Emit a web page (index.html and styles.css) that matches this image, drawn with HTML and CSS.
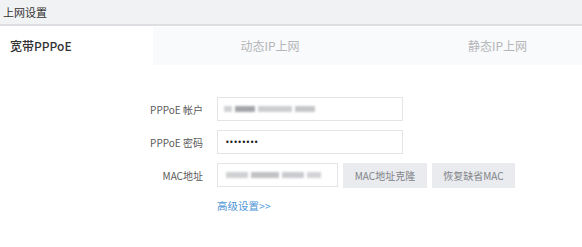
FILE: index.html
```html
<!DOCTYPE html>
<html lang="zh">
<head>
<meta charset="utf-8">
<title>上网设置</title>
<link rel="stylesheet" href="styles.css">
</head>
<body>
<div class="page">
  <div class="header">上网设置</div>
  <div class="tabs">
    <div class="tab tab-active">宽带PPPoE</div>
    <div class="tab tab-dyn">动态IP上网</div>
    <div class="tab tab-static">静态IP上网</div>
  </div>
  <div class="form">
    <div class="row">
      <label class="label">PPPoE 帐户</label>
      <div class="input input-wide">
        <span class="blur b1"></span><span class="blur b2"></span><span class="blur b3"></span><span class="blur b4"></span>
      </div>
    </div>
    <div class="row">
      <label class="label">PPPoE 密码</label>
      <div class="input input-wide"><span class="dots">••••••••</span></div>
    </div>
    <div class="row">
      <label class="label">MAC地址</label>
      <div class="input input-short">
        <span class="blur m1"></span><span class="blur m2"></span><span class="blur m3"></span><span class="blur m4"></span>
      </div>
      <button class="btn btn-clone">MAC地址克隆</button>
      <button class="btn btn-reset">恢复缺省MAC</button>
    </div>
    <div class="link-row"><a class="link">高级设置&gt;&gt;</a></div>
  </div>
</div>
</body>
</html>
```

FILE: styles.css
```css
* { box-sizing: border-box; }
html, body { margin: 0; padding: 0; background: #ffffff; }
body {
  font-family: "Noto Sans CJK SC", "Noto Sans", sans-serif;
  color: #333;
  width: 582px;
  height: 247px;
  overflow: hidden;
}
.header {
  height: 26px;
  background: #f1f2f4;
  border-bottom: 2px solid #dcdee1;
  font-size: 11px;
  line-height: 24px;
  padding-left: 3px;
  color: #333;
}
.tabs {
  display: flex;
  height: 38px;
  margin-top: 1px;
}
.tab {
  font-size: 12px;
  line-height: 38px;
  color: #b4b6b9;
  background: #f9fafb;
}
.tab-active {
  width: 153px;
  background: #ffffff;
  color: #333;
  font-weight: 500;
  padding-left: 10px;
  font-size: 12px;
}
.tab-dyn {
  width: 234px;
  text-align: center;
}
.tab-static {
  flex: 1;
  text-align: center;
  padding-left: 26px;
}
.form {
  padding-top: 32px;
  display: flex;
  flex-direction: column;
  gap: 9px;
}
.row {
  display: flex;
  align-items: center;
  height: 24px;
}
.label {
  width: 203px;
  text-align: right;
  font-size: 10px;
  color: #5a5a5a;
  margin-right: 14px;
}
.input {
  height: 24px;
  border: 1px solid #e2e4e7;
  background: #fff;
  display: flex;
  align-items: center;
  padding-left: 6px;
  gap: 3px;
}
.input-wide { width: 186px; }
.input-short { width: 121px; }
.blur {
  display: inline-block;
  height: 6px;
  background: #a9abae;
  filter: blur(1.2px);
  opacity: 0.8;
}
.b1 { width: 8px; background: #c5c7ca; }
.b2 { width: 20px; background: #8d8f93; }
.b3 { width: 34px; background: #c0c2c5; }
.b4 { width: 20px; background: #b6b8bb; }
.m1 { width: 22px; background: #c3c5c8; margin-left: 2px; }
.m2 { width: 28px; background: #b1b3b6; }
.m3 { width: 22px; background: #bdbfc2; }
.m4 { width: 14px; background: #c7c9cc; }
.dots {
  font-size: 8px;
  letter-spacing: -0.6px;
  color: #222;
  font-family: "DejaVu Sans", sans-serif;
  padding-left: 1px;
}
.btn {
  height: 25px;
  border: none;
  background: #e9ebef;
  color: #818387;
  font-family: "Noto Sans CJK SC", sans-serif;
  font-size: 10px;
  padding: 0;
}
.btn-clone { width: 84px; margin-left: 5px; }
.btn-reset { width: 83px; margin-left: 5px; }
.link-row {
  padding-left: 217px;
  margin-top: 3px;
  font-size: 10.5px;
  line-height: 14px;
}
.link {
  color: #4d94d6;
  text-decoration: none;
}
```
